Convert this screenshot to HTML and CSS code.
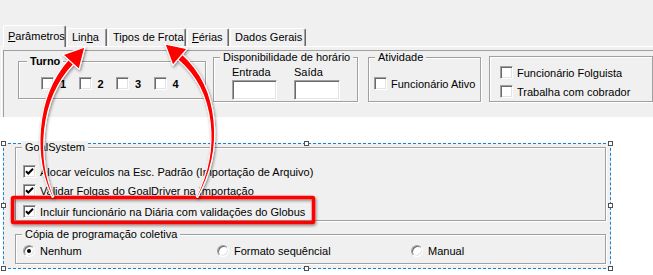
FILE: index.html
```html
<!DOCTYPE html>
<html lang="pt-BR">
<head>
    <meta charset="UTF-8">
    <title>Parâmetros</title>
    <link rel="stylesheet" href="styles.css">
</head>
<body>
    <div class="screen">
        <!-- Tab control -->
        <div class="form-top">
            <div class="tabs">
                <div class="tab tab-params active"><u>P</u>arâmetros</div>
                <div class="tab tab-linha">Lin<u>h</u>a</div>
                <div class="tab tab-frota">Tipos de Frota</div>
                <div class="tab tab-ferias"><u>F</u>érias</div>
                <div class="tab tab-dados">Dados Gerais</div>
            </div>
            <div class="tab-page">
                <div class="panel">
                    <div class="group group-turno">
                        <div class="group-title bold">Turno</div>
                        <div class="turno-row">
                            <div class="turno-item"><span class="cb"></span><span class="bold">1</span></div>
                            <div class="turno-item"><span class="cb"></span><span class="bold">2</span></div>
                            <div class="turno-item"><span class="cb"></span><span class="bold">3</span></div>
                            <div class="turno-item"><span class="cb"></span><span class="bold">4</span></div>
                        </div>
                    </div>
                    <div class="group group-disp">
                        <div class="group-title">Disponibilidade de horário</div>
                        <div class="fields">
                            <div class="field">
                                <div class="field-label">Entrada</div>
                                <div class="edit"></div>
                            </div>
                            <div class="field">
                                <div class="field-label">Saída</div>
                                <div class="edit wide"></div>
                            </div>
                        </div>
                    </div>
                    <div class="group group-ativ">
                        <div class="group-title">Atividade</div>
                        <div class="check-list">
                            <div class="check-row"><span class="cb"></span>Funcionário Ativo</div>
                        </div>
                    </div>
                    <div class="group group-extra">
                        <div class="check-list">
                            <div class="check-row"><span class="cb"></span>Funcionário Folguista</div>
                            <div class="check-row"><span class="cb"></span>Trabalha com cobrador</div>
                        </div>
                    </div>
                </div>
            </div>
        </div>

        <!-- Selected panel (design time) -->
        <div class="design">
            <div class="selection">
                <div class="group group-goal">
                    <div class="group-title">GoalSystem</div>
                    <div class="check-list">
                        <div class="check-row"><span class="cb checked"><svg viewBox="0 0 11 11"><path d="M2 5.2 L4.3 7.5 L9 2.8"/></svg></span>Alocar veículos na Esc. Padrão (Importação de Arquivo)</div>
                        <div class="check-row"><span class="cb checked"><svg viewBox="0 0 11 11"><path d="M2 5.2 L4.3 7.5 L9 2.8"/></svg></span>Validar Folgas do GoalDriver na Importação</div>
                        <div class="check-row later"><span class="cb checked"><svg viewBox="0 0 11 11"><path d="M2 5.2 L4.3 7.5 L9 2.8"/></svg></span>Incluir funcionário na Diária com validações do Globus</div>
                    </div>
                </div>
                <div class="group group-copia">
                    <div class="group-title">Cópia de programação coletiva</div>
                    <div class="radio-row">
                        <div class="radio-item"><span class="rb on"></span>Nenhum</div>
                        <div class="radio-item"><span class="rb"></span>Formato sequêncial</div>
                        <div class="radio-item"><span class="rb"></span>Manual</div>
                    </div>
                </div>

                <span class="handle tl"></span>
                <span class="handle tm"></span>
                <span class="handle tr"></span>
                <span class="handle ml"></span>
                <span class="handle mr"></span>
                <span class="handle bl"></span>
                <span class="handle bm"></span>
                <span class="handle br"></span>
            </div>
        </div>

        <!-- Annotation: highlight + arrows -->
        <svg class="overlay" width="653" height="275" viewBox="0 0 653 275">
            <defs>
                <filter id="shade" x="-20%" y="-20%" width="140%" height="140%">
                    <feDropShadow dx="1" dy="1.5" stdDeviation="1.5" flood-color="#000" flood-opacity="0.45"/>
                </filter>
            </defs>
            <rect class="mark" x="12.5" y="197.5" width="301" height="25" rx="1"/>
            <g class="arrow">
                <path d="M53.68 196.69 C37.97 159.65 38.59 100.92 73.57 64.37 L68.43 59.63 C33.41 99.08 34.03 160.35 52.32 197.31 Z"/>
                <path d="M85 47 L79.1 69.4 L62.9 54.6 Z"/>
            </g>
            <g class="arrow">
                <path d="M197.66 197.35 C223.96 150.39 220.51 88.87 182.3 54.36 L177.7 59.64 C215.49 91.13 220.04 149.61 196.34 196.65 Z"/>
                <path d="M164.9 43.9 L187.2 48.7 L172.8 65.3 Z"/>
            </g>
        </svg>
    </div>
</body>
</html>
```

FILE: styles.css
```css
/* General */
body {
    margin: 0;
    font-family: "Liberation Sans", Arial, sans-serif;
    font-size: 11px;
    color: #000;
    background: #fff;
}

.screen {
    position: relative;
    width: 653px;
    height: 275px;
    overflow: hidden;
}

.bold {
    font-weight: bold;
}

/* Tab control */
.form-top {
    height: 117px;
    background: #f0f0f0;
    overflow: hidden;
}

.tabs {
    display: flex;
    align-items: flex-end;
    height: 21px;
    padding: 25px 0 0 3px;
}

.tab {
    display: flex;
    align-items: center;
    height: 18px;
    padding: 0 0 0 4px;
    margin-right: 1px;
    box-sizing: border-box;
    line-height: 13px;
    border-top: 1px solid #fff;
    border-left: 1px solid #fff;
    border-right: 1px solid #696969;
    border-radius: 2px 2px 0 0;
    box-shadow: inset -1px 0 0 #a0a0a0;
    white-space: nowrap;
}

.tab.active {
    position: relative;
    z-index: 1;
    height: 22px;
    margin-bottom: -1px;
    background: #f0f0f0;
}

.tab-params { width: 63px; }
.tab-linha { width: 40px; }
.tab-frota { width: 78px; }
.tab-ferias { width: 42px; }
.tab-dados { width: 76px; }

.tab-page {
    margin-left: 1px;
    padding: 3px 0 0 1px;
    border-top: 1px solid #fff;
    border-left: 1px solid #fff;
}

.panel {
    display: flex;
    align-items: flex-start;
    height: 70px;
    padding-left: 14px;
    border-top: 1px solid #a0a0a0;
    border-left: 1px solid #a0a0a0;
}

/* Group boxes */
.group {
    box-sizing: border-box;
    border: 1px solid #a0a0a0;
    box-shadow: 1px 1px 0 #fff, inset 1px 1px 0 #fff;
}

.group-title {
    width: fit-content;
    margin: -7px 0 0 6px;
    padding: 0 3px;
    line-height: 13px;
    background: #f0f0f0;
    white-space: nowrap;
}

.group-turno {
    width: 188px;
    height: 38px;
    margin-top: 10px;
}

.group-turno .group-title {
    margin-left: 8px;
}

.group-disp {
    width: 145px;
    height: 45px;
    margin-left: 7px;
    margin-top: 6px;
}

.group-ativ {
    width: 113px;
    height: 45px;
    margin-left: 10px;
    margin-top: 6px;
}

.group-extra {
    width: 164px;
    height: 46px;
    margin-left: 8px;
    margin-top: 5px;
}

.turno-row {
    display: flex;
    padding: 9px 0 0 22px;
}

.turno-item {
    display: flex;
    align-items: center;
    width: 37.5px;
    height: 13px;
}

.turno-item .cb {
    margin-right: 6px;
}

.fields {
    display: flex;
    gap: 17px;
    padding: 2px 0 0 18px;
}

.field-label {
    line-height: 13px;
    margin-bottom: 1px;
}

.edit {
    width: 45px;
    height: 20px;
    box-sizing: border-box;
    background: #fff;
    border: 1px solid;
    border-color: #a0a0a0 #fff #fff #a0a0a0;
    box-shadow: inset 1px 1px 0 #696969, inset -1px -1px 0 #e3e3e3;
}

.edit.wide {
    width: 46px;
}

/* Check boxes */
.check-list {
    display: flex;
    flex-direction: column;
    gap: 6px;
}

.group-ativ .check-list {
    padding: 13px 0 0 5px;
}

.group-extra .check-list {
    padding: 9px 0 0 10px;
}

.group-goal .check-list {
    padding: 11px 0 0 7px;
}

.check-row {
    display: flex;
    align-items: center;
    gap: 4px;
    height: 13px;
    white-space: nowrap;
}

.check-row.later {
    margin-top: 2px;
}

.cb {
    display: inline-block;
    flex: none;
    width: 13px;
    height: 13px;
    box-sizing: border-box;
    background: #fff;
    border: 1px solid;
    border-color: #a0a0a0 #fff #fff #a0a0a0;
    box-shadow: inset 1px 1px 0 #696969, inset -1px -1px 0 #e3e3e3;
}

.cb svg {
    display: block;
    width: 11px;
    height: 11px;
}

.cb path {
    fill: none;
    stroke: #000;
    stroke-width: 2;
}

/* Radio buttons */
.radio-row {
    display: flex;
    padding: 3px 0 0 7px;
}

.radio-item {
    display: flex;
    align-items: center;
    gap: 5px;
    width: 194px;
    height: 13px;
}

.rb {
    position: relative;
    flex: none;
    width: 12px;
    height: 12px;
    box-sizing: border-box;
    border-radius: 50%;
    background: #fff;
    border: 1px solid;
    border-color: #a0a0a0 #fff #fff #a0a0a0;
    box-shadow: inset 1px 1px 0 #696969, inset -1px -1px 0 #e3e3e3;
}

.rb.on::after {
    content: "";
    position: absolute;
    left: 3px;
    top: 3px;
    width: 4px;
    height: 4px;
    border-radius: 50%;
    background: #000;
}

/* Design-time selection */
.design {
    height: 158px;
    overflow: hidden;
}

.selection {
    position: relative;
    width: 608px;
    height: 126px;
    margin: 26px 0 0 3px;
    padding: 3px 0 0 11px;
    box-sizing: border-box;
    border: 1px dashed #1682d8;
    background: #f0f0f0;
}

.group-goal {
    width: 591px;
    height: 74px;
}

.group-copia {
    width: 591px;
    height: 30px;
    margin-top: 13px;
}

.handle {
    position: absolute;
    width: 5px;
    height: 5px;
    box-sizing: border-box;
    border: 1px solid #505050;
    background: #fff;
}

.handle.tl, .handle.tm, .handle.tr { top: -3px; }
.handle.bl, .handle.bm, .handle.br { bottom: -3px; }
.handle.ml, .handle.mr { top: 50%; margin-top: -3px; }
.handle.tl, .handle.ml, .handle.bl { left: -3px; }
.handle.tr, .handle.mr, .handle.br { right: -3px; }
.handle.tm, .handle.bm { left: 50%; margin-left: -3px; }

/* Annotation overlay */
.overlay {
    position: absolute;
    top: 0;
    left: 0;
    pointer-events: none;
}

.mark {
    fill: none;
    stroke: #f00;
    stroke-width: 3.5;
    filter: url(#shade);
}

.arrow {
    filter: url(#shade);
}

.arrow path {
    fill: #f00;
    stroke: #fff;
    stroke-width: 1.2;
    stroke-linejoin: round;
}
```
